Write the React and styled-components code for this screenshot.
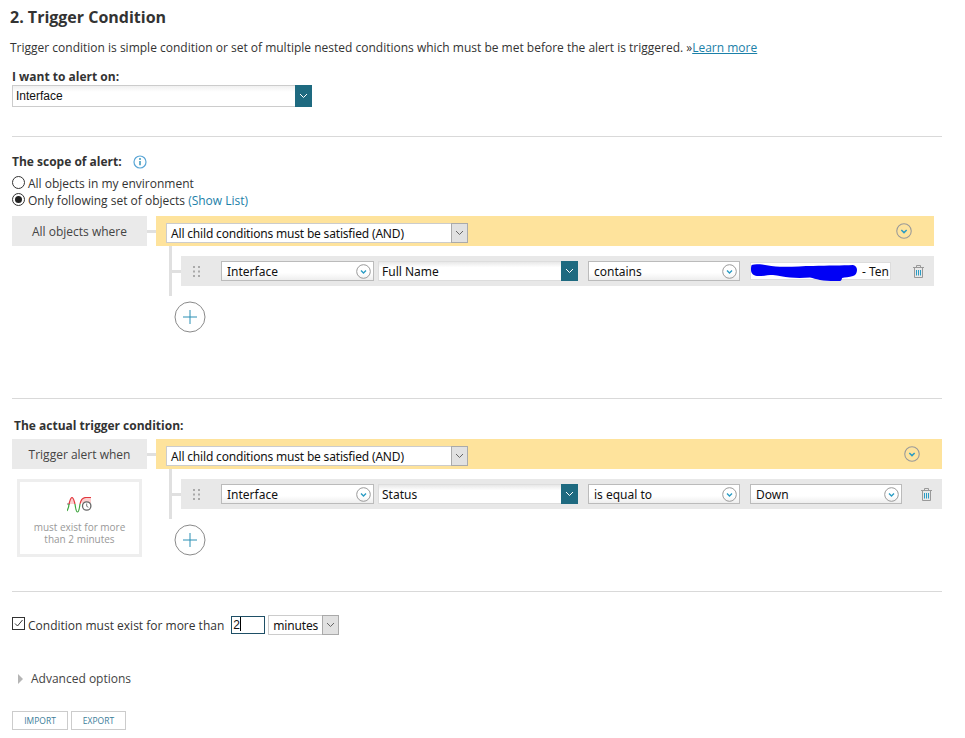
import React from 'react';
import styled, { createGlobalStyle } from 'styled-components';

const GlobalStyle = createGlobalStyle`
  html, body { margin: 0; padding: 0; background: #fff; }
  body { font-family: "Open Sans", sans-serif; font-size: 12px; color: #333; }
`;

const Page = styled.div`
  width: 965px;
  height: 738px;
  overflow: hidden;
  box-sizing: border-box;
  padding: 7px 23px 0 12px;
`;

const Title = styled.h2`
  margin: 0 0 0 -2px;
  font-size: 16px;
  line-height: 20px;
  font-weight: 700;
  color: #333;
`;

const Intro = styled.p`
  margin: 13px 0 0 -2px;
  font-size: 12px;
  line-height: 16px;
  color: #333;
  white-space: nowrap;
`;

const Link = styled.a`
  color: #1b80a8;
  text-decoration: ${(p) => (p.$underline ? 'underline' : 'none')};
`;

const FieldLabel = styled.div`
  margin-top: ${(p) => p.$top || 0}px;
  margin-left: ${(p) => p.$left || 0}px;
  font-size: 12px;
  line-height: 16px;
  font-weight: 700;
  color: #333;
  display: flex;
  align-items: center;
  gap: 11px;
`;

const WideSelect = styled.div`
  width: 300px;
  height: 22px;
  box-sizing: border-box;
  border: 1px solid #ccc;
  border-right: 0;
  display: flex;
  justify-content: space-between;
  background: linear-gradient(#f0f0f0, #fff 30%);
  font-family: "Liberation Sans", sans-serif;
  font-size: 12px;
  line-height: 20px;
  color: #111;
  padding-left: 3px;
`;

const TealButton = styled.span`
  width: ${(p) => p.$width || 17}px;
  margin-top: -1px;
  margin-bottom: -1px;
  background: #1e6a80;
  display: flex;
  align-items: center;
  justify-content: center;
  flex: none;
`;

const Divider = styled.hr`
  margin: ${(p) => p.$top}px 0 0;
  border: 0;
  height: 1px;
  background: #d9d9d9;
`;

const RadioList = styled.div`
  margin-top: 5px;
  display: flex;
  flex-direction: column;
`;

const OptionRow = styled.label`
  display: flex;
  align-items: center;
  height: 17px;
  gap: 3px;
  font-size: 12px;
  color: #333;
  white-space: nowrap;
`;

const Radio = styled.span`
  width: 11px;
  height: 11px;
  border: 1px solid #333;
  border-radius: 50%;
  background: #fff;
  display: flex;
  align-items: center;
  justify-content: center;
  margin-top: -3px;
  &::after {
    content: '';
    width: 7px;
    height: 7px;
    border-radius: 50%;
    background: ${(p) => (p.$checked ? '#222' : 'transparent')};
  }
`;

const Group = styled.div`
  margin-top: ${(p) => p.$top}px;
  margin-right: ${(p) => p.$right || 0}px;
  display: grid;
  grid-template-columns: 135px 9px 1fr;
`;

const LeftColumn = styled.div`
  display: flex;
  flex-direction: column;
  align-items: flex-start;
`;

const GroupLabel = styled.div`
  width: 135px;
  height: 30px;
  background: #eaeaea;
  font-size: 12px;
  line-height: 32px;
  text-align: center;
  color: #444;
`;

const Stub = styled.div`
  height: 3px;
  width: ${(p) => p.$width || 9}px;
  margin-top: ${(p) => p.$top || 0}px;
  background: #e0e0e0;
  flex: none;
`;

const RightColumn = styled.div`
  display: flex;
  flex-direction: column;
`;

const Band = styled.div`
  height: 30px;
  box-sizing: border-box;
  background: #fee39c;
  display: flex;
  align-items: flex-end;
  justify-content: space-between;
  padding: 0 ${(p) => p.$pad}px 3px 10px;
`;

const BandToggle = styled.span`
  display: flex;
  margin-bottom: 4px;
`;

const LogicSelect = styled.div`
  width: 302px;
  height: 20px;
  box-sizing: border-box;
  background: #fff;
  border: 1px solid #ccc;
  display: flex;
  justify-content: space-between;
  font-family: "Noto Sans", sans-serif;
  font-size: 12px;
  letter-spacing: -0.18px;
  line-height: 20px;
  color: #111;
  padding-left: 4px;
`;

const GreyArrow = styled.span`
  width: 17px;
  box-sizing: border-box;
  margin: -1px -1px -1px 0;
  background: #e1e1e1;
  border: 1px solid #aaa;
  display: flex;
  align-items: center;
  justify-content: center;
  flex: none;
`;

const Branch = styled.div`
  margin-left: 13px;
  height: 50px;
  border-left: 3px solid #e0e0e0;
  box-sizing: border-box;
  padding-top: 10px;
  display: flex;
  align-items: flex-start;
`;

const ConditionRow = styled.div`
  flex: 1;
  height: 30px;
  background: #e8e8e8;
  display: flex;
  align-items: center;
  padding-left: 12px;
  position: relative;
`;

const Grip = styled.svg`
  flex: none;
  margin-right: 21px;
`;

const PillSelect = styled.div`
  width: ${(p) => p.$width}px;
  margin-right: ${(p) => p.$gap}px;
  height: 20px;
  box-sizing: border-box;
  border: 1px solid #bbb;
  background: linear-gradient(#fff, #fff 60%, #eee);
  display: flex;
  align-items: center;
  justify-content: space-between;
  font-family: "Noto Sans", sans-serif;
  font-size: 12px;
  line-height: 18px;
  color: #111;
  padding: 1px 2px 0 5px;
  flex: none;
`;

const FieldSelect = styled.div`
  width: 200px;
  margin-right: 10px;
  height: 20px;
  box-sizing: border-box;
  border: 1px solid #ddd;
  border-right: 0;
  background: linear-gradient(#e8e8e8, #fff 30%);
  display: flex;
  justify-content: space-between;
  font-family: "Noto Sans", sans-serif;
  font-size: 12px;
  line-height: 20px;
  color: #111;
  padding-left: 3px;
  flex: none;
`;

const ValueInput = styled.div`
  width: 141px;
  height: 18px;
  box-sizing: border-box;
  background: #fff;
  border: 1px solid #ddd;
  position: relative;
  font-family: "Noto Sans", sans-serif;
  font-size: 12px;
  line-height: 17px;
  color: #111;
  text-align: right;
  padding-right: 1px;
  flex: none;
`;

const Scribble = styled.svg`
  position: absolute;
  left: -1px;
  top: -1px;
`;

const Trash = styled.svg`
  position: absolute;
  right: ${(p) => p.$right}px;
  top: 9px;
`;

const AddButton = styled.button`
  width: 32px;
  height: 32px;
  margin: 5px 0 0 18px;
  padding: 0;
  border: 0;
  background: none;
  display: block;
`;

const SummaryBox = styled.div`
  width: 125px;
  height: 78px;
  margin: 10px 0 0 5px;
  box-sizing: border-box;
  border: 3px solid #eee;
  display: flex;
  flex-direction: column;
  align-items: center;
  gap: 7px;
  padding-top: 15px;
  font-size: 10px;
  line-height: 12px;
  color: #999;
  text-align: center;
  white-space: nowrap;
`;

const DurationRow = styled.div`
  margin-top: 23px;
  display: flex;
  align-items: center;
  height: 20px;
  font-size: 12px;
  color: #333;
`;

const CheckBox = styled.span`
  width: 11px;
  height: 11px;
  border: 1px solid #333;
  margin-right: 3px;
  margin-top: -3px;
  display: flex;
  flex: none;
`;

const NumberInput = styled.div`
  width: 31px;
  height: 16px;
  margin-left: 7px;
  border: 1px solid #1e4f66;
  font-family: "Liberation Sans", sans-serif;
  font-size: 12px;
  line-height: 16px;
  color: #111;
  padding-left: 1px;
`;

const Caret = styled.span`
  display: inline-block;
  width: 1px;
  height: 14px;
  background: #000;
  vertical-align: -2px;
`;

const UnitSelect = styled.div`
  width: 71px;
  height: 20px;
  margin-left: 3px;
  box-sizing: border-box;
  border: 1px solid #ccc;
  display: flex;
  justify-content: space-between;
  font-family: "Noto Sans", sans-serif;
  font-size: 12px;
  letter-spacing: -0.18px;
  line-height: 20px;
  color: #111;
  padding-left: 4px;
`;

const Advanced = styled.div`
  margin-top: 36px;
  margin-left: 6px;
  display: flex;
  align-items: center;
  gap: 8px;
  font-size: 12px;
  line-height: 16px;
  color: #444;
`;

const Triangle = styled.span`
  width: 0;
  height: 0;
  border-left: 5px solid #b5b5b5;
  border-top: 5px solid transparent;
  border-bottom: 5px solid transparent;
`;

const ButtonBar = styled.div`
  margin-top: 24px;
  display: flex;
  gap: 3px;
`;

const SmallButton = styled.button`
  height: 19px;
  width: ${(p) => p.$width}px;
  padding: 0;
  box-sizing: border-box;
  border: 1px solid #ccc;
  background: #fff;
  font-family: "Open Sans", sans-serif;
  font-size: 8.5px;
  color: #3b7d99;
`;

const Chevron = ({ color = '#fff' }) => (
  <svg width="9" height="6" viewBox="0 0 9 6">
    <path d="M1 1l3.5 3.5L8 1" fill="none" stroke={color} strokeWidth="1" />
  </svg>
);

const CircleChevron = ({ size = 15 }) => (
  <svg width={size} height={size} viewBox="0 0 15 15" style={{ flex: 'none' }}>
    <circle cx="7.5" cy="7.5" r="6.8" fill="none" stroke="#999" strokeWidth="1" />
    <path d="M5 6.5l2.5 2.5L10 6.5" fill="none" stroke="#2a9cc4" strokeWidth="1.4" />
  </svg>
);

const TrashIcon = ({ right }) => (
  <Trash $right={right} width="11" height="13" viewBox="0 0 11 13">
    <path d="M0 2.5h11M3.5 2.5V0.5h4v2" fill="none" stroke="#999" strokeWidth="1" />
    <path d="M1.5 3v9.5h8V3" fill="none" stroke="#999" strokeWidth="1" />
    <path d="M3.5 5v5.5M5.5 5v5.5M7.5 5v5.5" stroke="#2a9cc4" strokeWidth="1" />
  </Trash>
);

const GripIcon = () => (
  <Grip width="7" height="11" viewBox="0 0 7 11">
    {[0, 4.5, 9].map((y) => (
      <g key={y} fill="#aaa">
        <rect x="0" y={y} width="2" height="2" />
        <rect x="5" y={y} width="2" height="2" />
      </g>
    ))}
  </Grip>
);

const PlusIcon = () => (
  <svg width="32" height="32" viewBox="0 0 32 32">
    <circle cx="16" cy="16" r="15" fill="#fff" stroke="#8a8a8a" strokeWidth="1" />
    <path d="M16 9v14M9 16h14" stroke="#2a8fb4" strokeWidth="1" />
  </svg>
);

const InfoIcon = () => (
  <svg width="14" height="14" viewBox="0 0 14 14">
    <circle cx="7" cy="7" r="6" fill="none" stroke="#5aa6d6" strokeWidth="1.2" />
    <path d="M7 6v4.2" stroke="#2a8fb4" strokeWidth="1.4" />
    <circle cx="7" cy="4" r="0.9" fill="#2a8fb4" />
  </svg>
);

const WaveIcon = () => (
  <svg width="25" height="17" viewBox="0 0 25 17" style={{ flex: 'none' }}>
    <path d="M2 7C3 3 4 0.5 5 0.5S7 3 8 7ZM13 7C14 2 16 0.5 19 0.5H24V6H14Z" fill="#fbcfcf" />
    <path d="M0 7H3" stroke="#777" strokeWidth="1" />
    <path d="M2 7C3 3 4 0.5 5 0.5S7 3 8 7" fill="none" stroke="#e2393f" strokeWidth="1.2" />
    <path d="M13 7C14 2 16 0.5 19 0.5H24" fill="none" stroke="#e2393f" strokeWidth="1.2" />
    <path d="M0 14C1 12 2 10 2 7M8 7C8.5 11 9 15 10.5 15S12.5 11 13 7" fill="none" stroke="#3ea53e" strokeWidth="1.2" />
    <circle cx="19.7" cy="9" r="4.2" fill="#fff" stroke="#666" strokeWidth="1.3" />
    <path d="M19.7 6.5V9.3l1.7 1" fill="none" stroke="#555" strokeWidth="0.8" />
  </svg>
);

const BlueScribble = () => (
  <Scribble width="110" height="20" viewBox="0 0 110 20">
    <path
      d="M1.7 3C4 2 7 2 10 2.3C17 3 24 4.7 30 4.7C42 5 52 4 63 4C78 3.6 92 3.4 103 3C106 3.5 107 6 107 8C107 11 105.5 13.4 103 14C99 15 95 15.5 92 16C92 17.5 91 19 90 19C83 19.3 76 19 70 18C66 17.4 63 16 60 15.6C53 16 46 16 40 15.6C34 15 28 13.4 23 13C17 13 12 14.5 7 14C3 13.5 1 11 1 8C1 6 1 4 1.7 3Z"
      fill="#0000f5"
    />
  </Scribble>
);

const Condition = ({ field, operator, value, scribble, trashRight }) => (
  <ConditionRow>
    <GripIcon />
    <PillSelect $width={153} $gap={4}>
      Interface
      <CircleChevron />
    </PillSelect>
    <FieldSelect>
      {field}
      <TealButton>
        <Chevron />
      </TealButton>
    </FieldSelect>
    <PillSelect $width={152} $gap={10}>
      {operator}
      <CircleChevron />
    </PillSelect>
    {scribble ? (
      <ValueInput>
        <BlueScribble />
        {value}
      </ValueInput>
    ) : (
      <PillSelect $width={152} $gap={0}>
        {value}
        <CircleChevron />
      </PillSelect>
    )}
    <TrashIcon right={trashRight} />
  </ConditionRow>
);

const ConditionGroup = ({ top, right, pad, label, summary, children }) => (
  <Group $top={top} $right={right}>
    <LeftColumn>
      <GroupLabel>{label}</GroupLabel>
      {summary}
    </LeftColumn>
    <Stub $top={14} />
    <RightColumn>
      <Band $pad={pad}>
        <LogicSelect>
          All child conditions must be satisfied (AND)
          <GreyArrow>
            <Chevron color="#666" />
          </GreyArrow>
        </LogicSelect>
        <BandToggle>
          <CircleChevron size={16} />
        </BandToggle>
      </Band>
      <Branch>
        <Stub $top={14} />
        {children}
      </Branch>
      <AddButton>
        <PlusIcon />
      </AddButton>
    </RightColumn>
  </Group>
);

export default function App() {
  return (
    <Page>
      <GlobalStyle />
      <Title>2. Trigger Condition</Title>
      <Intro>
        Trigger condition is simple condition or set of multiple nested conditions which must be met before the alert is
        triggered. »<Link $underline>Learn more</Link>
      </Intro>

      <FieldLabel $top={13}>I want to alert on:</FieldLabel>
      <WideSelect>
        Interface
        <TealButton>
          <Chevron />
        </TealButton>
      </WideSelect>

      <Divider $top={29} />

      <FieldLabel $top={17}>
        The scope of alert:
        <InfoIcon />
      </FieldLabel>
      <RadioList>
        <OptionRow>
          <Radio />
          All objects in my environment
        </OptionRow>
        <OptionRow>
          <Radio $checked />
          <span>
            Only following set of objects <Link>(Show List)</Link>
          </span>
        </OptionRow>
      </RadioList>

      <ConditionGroup top={7} right={8} pad={22} label="All objects where">
        <Condition field="Full Name" operator="contains" value="- Ten" scribble trashRight={10} />
      </ConditionGroup>

      <Divider $top={65} />

      <FieldLabel $top={19} $left={2}>The actual trigger condition:</FieldLabel>

      <ConditionGroup
        top={5}
        pad={22}
        label="Trigger alert when"
        summary={
          <SummaryBox>
            <WaveIcon />
            <span>
              must exist for more
              <br />
              than 2 minutes
            </span>
          </SummaryBox>
        }
      >
        <Condition field="Status" operator="is equal to" value="Down" trashRight={10} />
      </ConditionGroup>

      <Divider $top={34} />

      <DurationRow>
        <CheckBox>
          <svg width="11" height="11" viewBox="0 0 11 11">
            <path d="M2 5.5l2.5 2.5L9.5 2" fill="none" stroke="#333" strokeWidth="1" />
          </svg>
        </CheckBox>
        Condition must exist for more than
        <NumberInput>
          2<Caret />
        </NumberInput>
        <UnitSelect>
          minutes
          <GreyArrow>
            <Chevron color="#666" />
          </GreyArrow>
        </UnitSelect>
      </DurationRow>

      <Advanced>
        <Triangle />
        Advanced options
      </Advanced>

      <ButtonBar>
        <SmallButton $width={56}>IMPORT</SmallButton>
        <SmallButton $width={55}>EXPORT</SmallButton>
      </ButtonBar>
    </Page>
  );
}
